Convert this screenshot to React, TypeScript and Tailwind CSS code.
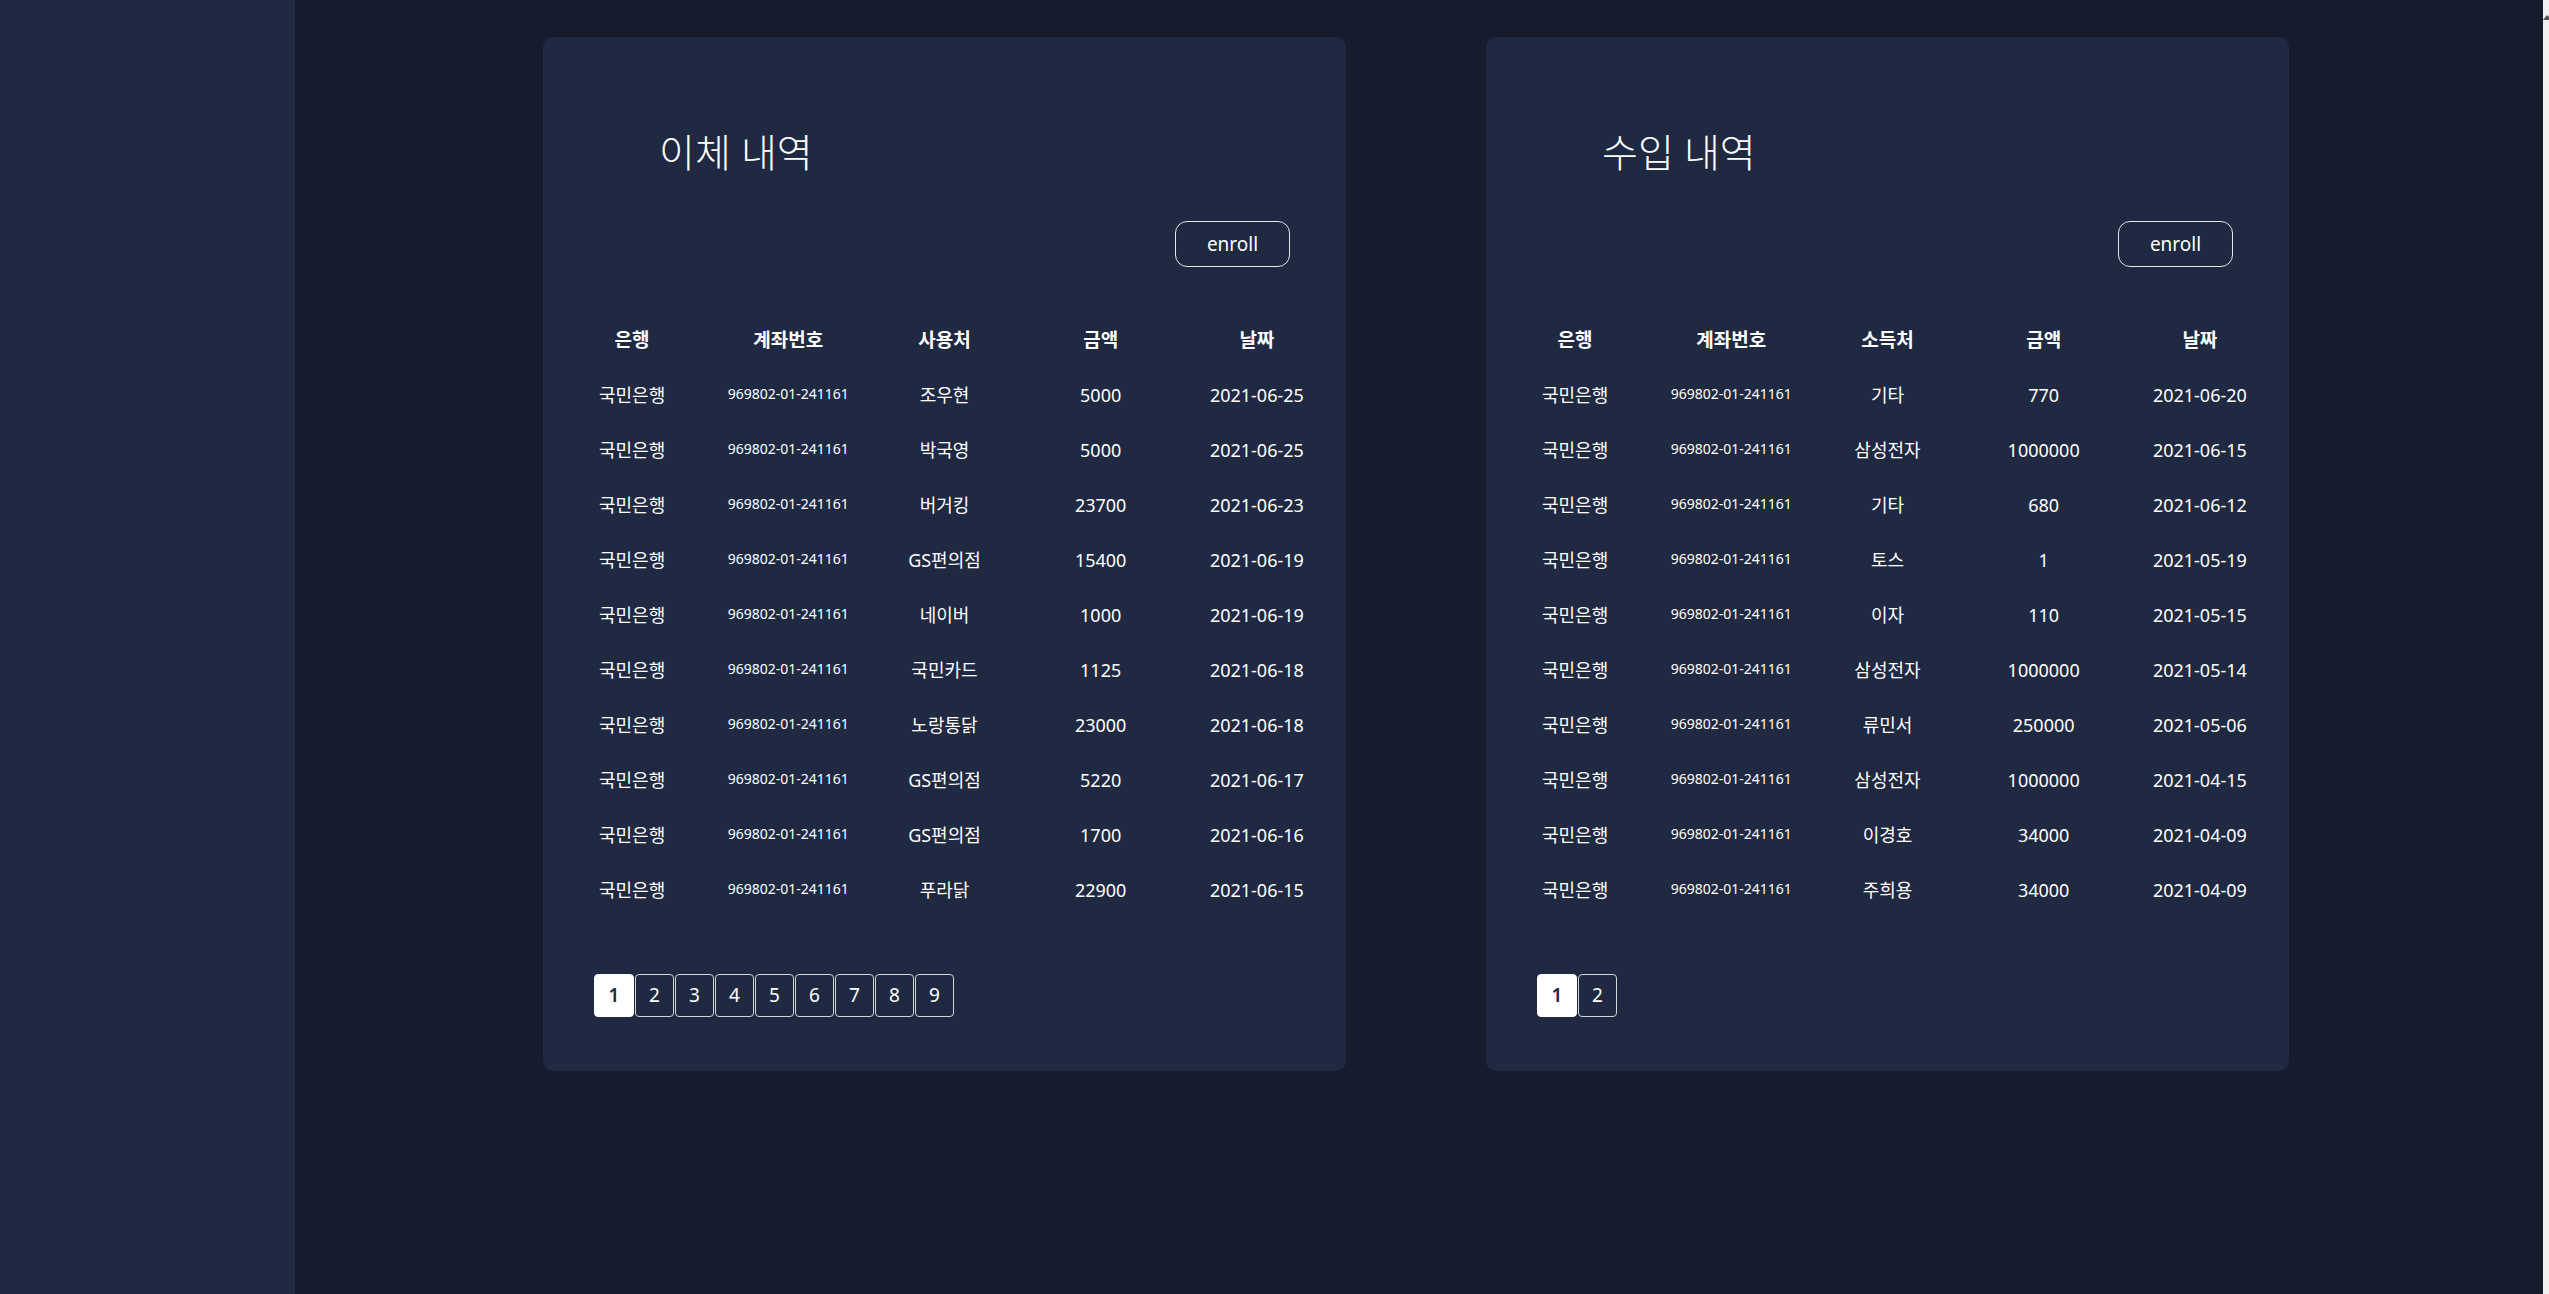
import React from "react";

type Row = [string, number, string];

const transfers: Row[] = [
  ["조우현", 5000, "2021-06-25"],
  ["박국영", 5000, "2021-06-25"],
  ["버거킹", 23700, "2021-06-23"],
  ["GS편의점", 15400, "2021-06-19"],
  ["네이버", 1000, "2021-06-19"],
  ["국민카드", 1125, "2021-06-18"],
  ["노랑통닭", 23000, "2021-06-18"],
  ["GS편의점", 5220, "2021-06-17"],
  ["GS편의점", 1700, "2021-06-16"],
  ["푸라닭", 22900, "2021-06-15"],
];

const incomes: Row[] = [
  ["기타", 770, "2021-06-20"],
  ["삼성전자", 1000000, "2021-06-15"],
  ["기타", 680, "2021-06-12"],
  ["토스", 1, "2021-05-19"],
  ["이자", 110, "2021-05-15"],
  ["삼성전자", 1000000, "2021-05-14"],
  ["류민서", 250000, "2021-05-06"],
  ["삼성전자", 1000000, "2021-04-15"],
  ["이경호", 34000, "2021-04-09"],
  ["주희용", 34000, "2021-04-09"],
];

function HistoryCard({ title, place, rows, pages }: { title: string; place: string; rows: Row[]; pages: number }) {
  return (
    <section className="w-[803px] self-start rounded-[10px] bg-[#1f2942] px-[11px] pt-[85px] pb-[54px] text-white">
      <h1 className="ml-[105px] text-[39px] font-light leading-[60px]">{title}</h1>
      <div className="mt-[39px] flex justify-end pr-[45px]">
        <button className="h-[46px] w-[115px] rounded-[12px] border border-[#e5e7eb] text-[19px]">enroll</button>
      </div>
      <table className="mt-[46px] w-full table-fixed text-center">
        <thead>
          <tr className="h-[55px] text-[19px] font-bold">
            <th>은행</th>
            <th>계좌번호</th>
            <th>{place}</th>
            <th>금액</th>
            <th>날짜</th>
          </tr>
        </thead>
        <tbody>
          {rows.map((r, i) => (
            <tr key={i} className="h-[55px] text-[18px]">
              <td>국민은행</td>
              <td className="pb-[5px] text-[14px]">969802-01-241161</td>
              <td>{r[0]}</td>
              <td>{r[1]}</td>
              <td>{r[2]}</td>
            </tr>
          ))}
        </tbody>
      </table>
      <div className="mt-[56px] ml-[40px] flex gap-px">
        {Array.from({ length: pages }, (_, i) => (
          <button
            key={i}
            className={
              i === 0
                ? "h-[43px] w-[40px] rounded-[4px] border border-white bg-white text-[19px] font-semibold text-[#1f2942]"
                : "h-[43px] w-[39px] rounded-[4px] border border-[#d1d5db] text-[19px]"
            }
          >
            {i + 1}
          </button>
        ))}
      </div>
    </section>
  );
}

export default function App() {
  return (
    <div
      className="flex h-screen w-full bg-[#161c2e]"
      style={{ fontFamily: "'Noto Sans', 'Noto Sans CJK KR', sans-serif" }}
    >
      <aside className="w-[295px] shrink-0 bg-[#1f2942]" />
      <main className="flex flex-1 gap-[140px] pt-[37px] pl-[248px]">
        <HistoryCard title="이체 내역" place="사용처" rows={transfers} pages={9} />
        <HistoryCard title="수입 내역" place="소득처" rows={incomes} pages={2} />
      </main>
      <div className="w-[6px] shrink-0 bg-[#f0f0f0] pt-[14px]">
        <svg width="6" height="8" viewBox="0 0 6 8">
          <polygon points="0,6 4,1 6,3 6,6" fill="#555" />
        </svg>
      </div>
    </div>
  );
}
